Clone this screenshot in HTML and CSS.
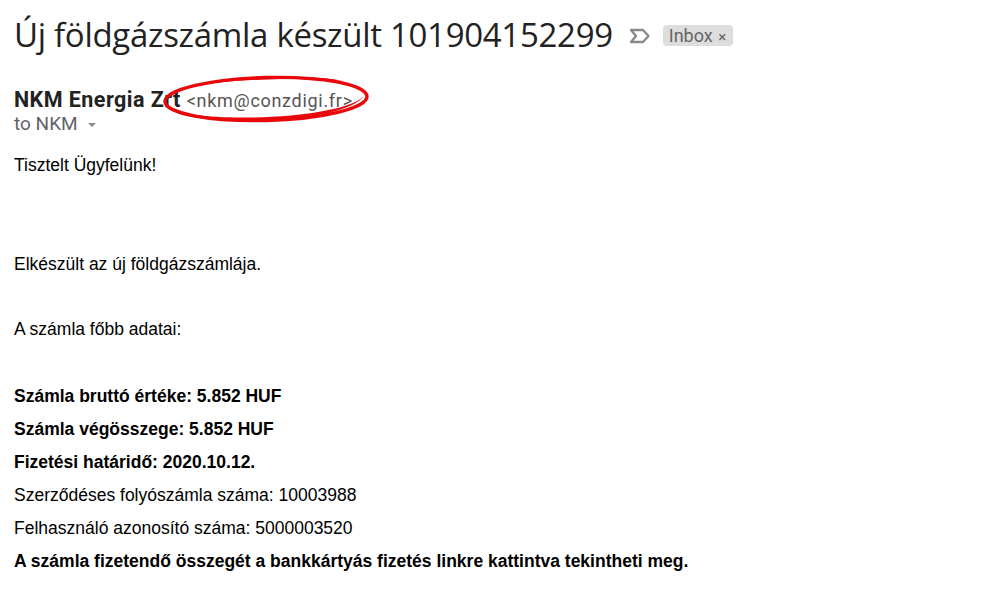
FILE: index.html
```html
<!DOCTYPE html>
<html lang="hu">
<head>
<meta charset="utf-8">
<link rel="stylesheet" href="styles.css">
</head>
<body>
<div class="page">
  <div class="subject-row">
    <h1 class="subject">Új földgázszámla készült 101904152299</h1>
    <svg class="imp" width="22" height="16" viewBox="0 0 22 16"><path d="M2 2 H14 L19.5 8 L14 14 H2 L7 8 Z" fill="none" stroke="#8a8a8a" stroke-width="2.4" stroke-linejoin="round"/></svg>
    <span class="chip">Inbox <span class="x">×</span></span>
  </div>
  <div class="sender">
    <span class="name">NKM Energia Zrt</span>
    <span class="addr">&lt;nkm@conzdigi.fr&gt;</span>
    <svg class="circle" width="220" height="56" viewBox="0 0 220 56">
      <g transform="rotate(-1.5 111 27)">
        <ellipse cx="111" cy="27" rx="101" ry="21.5" fill="none" stroke="#e8080c" stroke-width="3.4"/>
        <path d="M13 32 C28 55 192 56 210 25 C194 50 32 51 13 32 Z" fill="#e8080c"/>
        <path d="M40 12 C80 3 150 3 190 11 C150 6 80 6 40 12 Z" fill="#e8080c"/>
      </g>
    </svg>
  </div>
  <div class="to">to NKM <span class="caret"></span></div>
  <div class="body">
    <p class="line greet">Tisztelt Ügyfelünk!</p>
    <p class="line intro">Elkészült az új földgázszámlája.</p>
    <p class="line lead">A számla főbb adatai:</p>
    <div class="details">
      <p class="row b">Számla bruttó értéke: 5.852 HUF</p>
      <p class="row b">Számla végösszege: 5.852 HUF</p>
      <p class="row b">Fizetési határidő: 2020.10.12.</p>
      <p class="row">Szerződéses folyószámla száma: 10003988</p>
      <p class="row">Felhasználó azonosító száma: 5000003520</p>
      <p class="row b">A számla fizetendő összegét a bankkártyás fizetés linkre kattintva tekintheti meg.</p>
    </div>
  </div>
</div>
</body>
</html>
```
FILE: styles.css
```css
html, body { margin: 0; padding: 0; background: #fff; }
.page { padding: 12px 14px 0 14px; }
.subject-row { display: flex; align-items: center; height: 46px; }
.subject {
  margin: 0;
  font-family: "Open Sans", Roboto, sans-serif;
  font-weight: 400;
  font-size: 33px;
  color: #222;
  letter-spacing: -0.3px;
  line-height: 46px;
}
.imp { margin-left: 16px; margin-top: 2px; }
.chip {
  margin-left: 12px;
  margin-top: 0;
  background: #dddddd;
  border-radius: 4px;
  padding: 0 7px 0 6px;
  height: 21px;
  line-height: 21px;
  font-family: Roboto, "Open Sans", sans-serif;
  font-size: 18px;
  color: #666;
}
.chip .x { font-size: 15px; margin-left: 1px; }
.sender {
  position: relative;
  margin-top: 30px;
  height: 24px;
  line-height: 24px;
  font-family: Roboto, sans-serif;
  display: flex;
  align-items: baseline;
}
.name { font-weight: 700; font-size: 21.5px; color: #222; letter-spacing: 0.45px; }
.addr { font-size: 18px; color: #555; margin-left: 6px; letter-spacing: 0.7px; }
.circle { position: absolute; left: 141px; top: -16px; pointer-events: none; }
.to {
  font-family: Roboto, sans-serif;
  font-size: 19px;
  color: #5f6368;
  height: 24px;
  line-height: 24px;
  display: flex;
  align-items: center;
}
.caret {
  display: inline-block;
  width: 0; height: 0;
  border-left: 4.5px solid transparent;
  border-right: 4.5px solid transparent;
  border-top: 4.5px solid #888;
  margin-left: 10px;
  margin-top: 1px;
}
.body {
  font-family: "Liberation Sans", Arial, sans-serif;
  font-size: 17.5px;
  color: #000;
  margin-top: 19px;
}
.line { margin: 0; line-height: 20px; }
.intro { margin-top: 79px; }
.lead { margin-top: 45px; }
.details { margin-top: 41px; }
.row { margin: 0; line-height: 33px; }
.row.b { font-weight: 700; }
```
